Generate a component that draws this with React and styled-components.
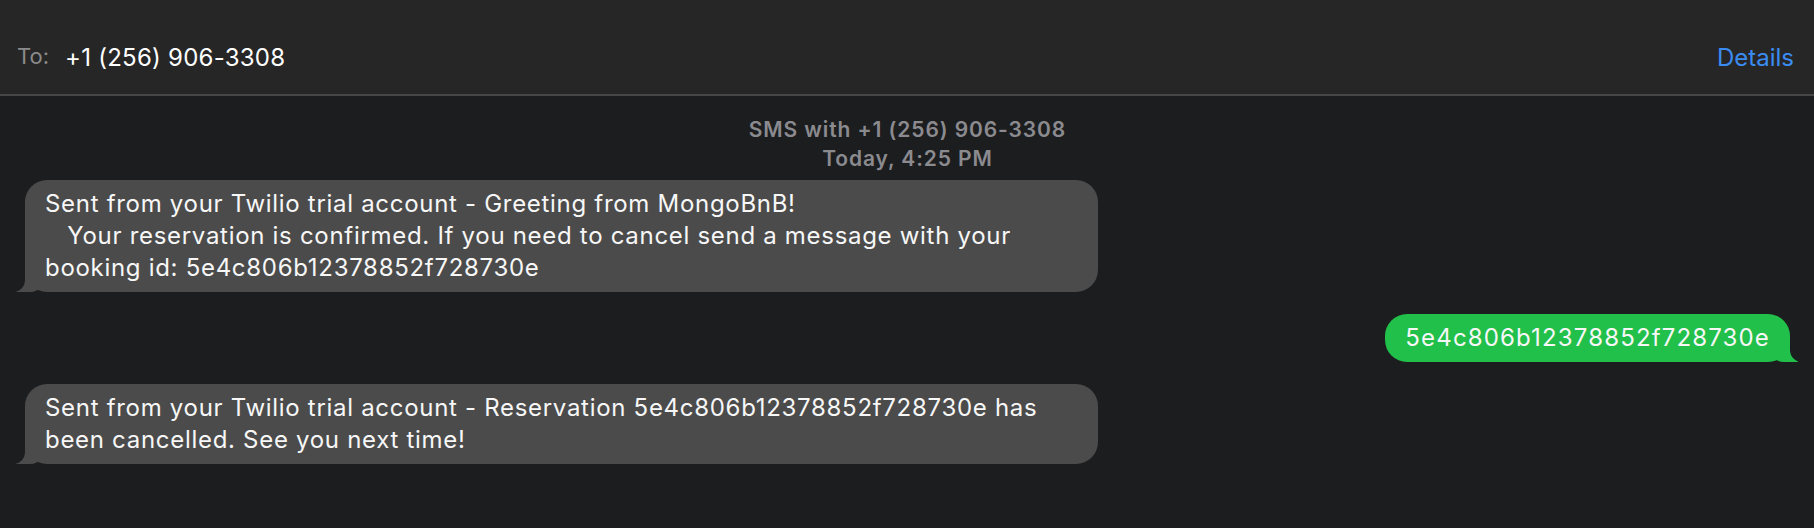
import styled, { createGlobalStyle } from "styled-components";

const GlobalStyle = createGlobalStyle`
  html, body {
    margin: 0;
    background: #1c1d1f;
  }
  body {
    font-family: Inter, "Noto Sans", "Liberation Sans", sans-serif;
    -webkit-font-smoothing: antialiased;
  }
`;

const messages = [
  {
    id: 1,
    sent: false,
    text: "Sent from your Twilio trial account - Greeting from MongoBnB!\n   Your reservation is confirmed. If you need to cancel send a message with your booking id: 5e4c806b12378852f728730e",
  },
  { id: 2, sent: true, text: "5e4c806b12378852f728730e" },
  {
    id: 3,
    sent: false,
    text: "Sent from your Twilio trial account - Reservation 5e4c806b12378852f728730e has been cancelled. See you next time!",
  },
];

const App = () => {
  return (
    <Window>
      <GlobalStyle />
      <Header>
        <ToLabel>To:</ToLabel>
        <Recipient>+1 (256) 906-3308</Recipient>
        <DetailsLink href="#">Details</DetailsLink>
      </Header>
      <Thread>
        <Stamp>
          SMS with +1 (256) 906-3308
          <br />
          Today, 4:25 PM
        </Stamp>
        {messages.map((m) => (
          <Row key={m.id} $sent={m.sent}>
            <Bubble $sent={m.sent}>{m.text}</Bubble>
          </Row>
        ))}
      </Thread>
    </Window>
  );
};

const Window = styled.div`
  display: flex;
  flex-direction: column;
  min-height: 100vh;
  background: #1c1d1f;
`;

const Header = styled.header`
  display: flex;
  align-items: flex-start;
  box-sizing: border-box;
  height: 96px;
  padding: 43px 20px 0 17px;
  background: #262626;
  border-bottom: 2px solid #474747;
  line-height: 30px;
`;

const ToLabel = styled.span`
  margin-top: -2px;
  font-size: 22px;
  color: #8a8a8a;
`;

const Recipient = styled.span`
  margin-left: 16px;
  font-size: 24px;
  letter-spacing: 0.25px;
  color: #ffffff;
`;

const DetailsLink = styled.a`
  margin-left: auto;
  font-size: 24px;
  color: #3b8cf2;
  text-decoration: none;
`;

const Thread = styled.main`
  display: flex;
  flex-direction: column;
  gap: 22px;
  padding: 19px 24px 0 25px;
`;

const Stamp = styled.div`
  margin-bottom: -15px;
  text-align: center;
  font-size: 21px;
  font-weight: 600;
  letter-spacing: 0.9px;
  line-height: 29px;
  color: #8b8b8f;
`;

const Row = styled.div`
  display: flex;
  justify-content: ${(p) => (p.$sent ? "flex-end" : "flex-start")};
`;

const Bubble = styled.div`
  position: relative;
  box-sizing: border-box;
  max-width: 1073px;
  padding: 8px 20px;
  border-radius: 22px;
  background: ${(p) => (p.$sent ? "#21c04a" : "#4b4b4b")};
  color: #f7f7f7;
  font-size: 24px;
  letter-spacing: ${(p) => (p.$sent ? "1.15px" : "0.7px")};
  line-height: 32px;
  white-space: pre-wrap;

  &::before,
  &::after {
    content: "";
    position: absolute;
    bottom: 0;
    height: 22px;
  }

  &::before {
    ${(p) => (p.$sent ? "right: -8px;" : "left: -9px;")}
    width: 30px;
    background: ${(p) => (p.$sent ? "#21c04a" : "#4b4b4b")};
    ${(p) =>
      p.$sent
        ? "border-bottom-left-radius: 16px;"
        : "border-bottom-right-radius: 16px;"}
  }

  &::after {
    ${(p) => (p.$sent ? "right: -30px;" : "left: -30px;")}
    width: 30px;
    background: #1c1d1f;
    ${(p) =>
      p.$sent
        ? "border-bottom-left-radius: 12px;"
        : "border-bottom-right-radius: 12px;"}
  }
`;

export default App;
